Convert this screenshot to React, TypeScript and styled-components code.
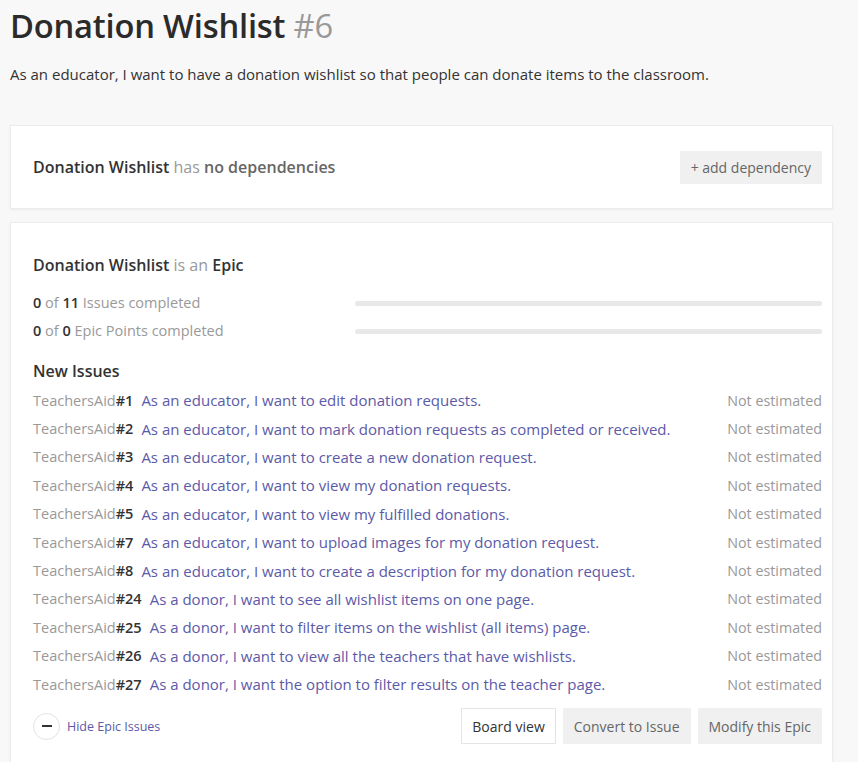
import React from "react";
import styled, { createGlobalStyle } from "styled-components";

const Global = createGlobalStyle`
  html, body { margin: 0; padding: 0; background: #f8f8f8; }
  body { font-family: "Open Sans", "Noto Sans", sans-serif; color: #333; }
  * { box-sizing: border-box; }
`;

const Page = styled.div`
  padding: 4px 25px 0 10px;
`;

const Title = styled.h1`
  margin: 0;
  font-size: 32.7px;
  font-weight: 600;
  color: #2b2b2b;
  line-height: 44px;
  letter-spacing: -0.2px;
`;

const Num = styled.span`
  color: #999;
  font-weight: 400;
`;

const Desc = styled.p`
  margin: 16px 0 0;
  font-size: 15px;
  color: #333;
  line-height: 20px;
`;

const Card = styled.section`
  background: #fff;
  border: 1px solid #ececec;
  box-shadow: 0 1px 2px rgba(0, 0, 0, 0.06);
  margin-top: 13px;
  padding: 22px 10px 22px 22px;
`;

const TopCard = styled(Card)`
  margin-top: 41px;
  padding: 24px 10px 24px 22px;
  display: flex;
  align-items: center;
  justify-content: space-between;
  min-height: 84px;
`;

const Statement = styled.div`
  font-size: 16px;
  font-weight: 600;
  color: #333;
`;

const Muted = styled.span`
  color: #999;
  font-weight: 400;
`;

const Grey = styled.span`
  color: #666;
`;

const Button = styled.button<{ $light?: boolean }>`
  font-family: inherit;
  font-size: 14px;
  height: ${(p) => (p.$light ? "36px" : "33px")};
  padding: 0 10px;
  border: 1px solid ${(p) => (p.$light ? "#e4e4e4" : "#f0f0f0")};
  background: ${(p) => (p.$light ? "#fff" : "#f0f0f0")};
  color: ${(p) => (p.$light ? "#333" : "#666")};
  cursor: pointer;
`;

const ActionButton = styled(Button)`
  height: 36px;
`;

const EpicHead = styled(Statement)`
  margin-top: 9px;
  line-height: 22px;
`;

const Progress = styled.div`
  margin-top: 17px;
  display: flex;
  flex-direction: column;
  gap: 8px;
`;

const ProgressRow = styled.div`
  display: grid;
  grid-template-columns: 322px 1fr;
  align-items: center;
  font-size: 14.5px;
  color: #999;
  line-height: 20px;
`;

const Strong = styled.b`
  color: #333;
  font-weight: 600;
`;

const Bar = styled.div`
  height: 5px;
  border-radius: 3px;
  background: #e8e8e8;
`;

const SubHead = styled.h3`
  margin: 19px 0 0;
  font-size: 16px;
  font-weight: 600;
  color: #333;
  line-height: 22px;
`;

const List = styled.ul`
  list-style: none;
  margin: 4px 0 0;
  padding: 0;
`;

const Item = styled.li`
  display: flex;
  align-items: center;
  justify-content: space-between;
  height: 28.4px;
`;

const Key = styled.span`
  color: #999;
  font-size: 14.5px;
  margin-right: 8px;
  white-space: nowrap;
`;

const Link = styled.a`
  color: #5c5aa8;
  font-size: 15px;
  text-decoration: none;
  flex: 1;
  white-space: nowrap;
`;

const Estimate = styled.span`
  color: #999;
  font-size: 14.3px;
  white-space: nowrap;
`;

const Footer = styled.div`
  margin-top: 10px;
  display: flex;
  align-items: center;
  justify-content: space-between;
`;

const Toggle = styled.a`
  display: flex;
  align-items: center;
  gap: 7px;
  color: #5c5aa8;
  font-size: 12.5px;
  text-decoration: none;
`;

const Circle = styled.span`
  width: 27px;
  height: 27px;
  border-radius: 50%;
  border: 1px solid #e2e2e2;
  display: flex;
  align-items: center;
  justify-content: center;
`;

const Minus = styled.span`
  width: 10px;
  height: 2px;
  background: #333;
`;

const Actions = styled.div`
  display: flex;
  gap: 7px;
`;

const issues: [string, string][] = [
  ["1", "As an educator, I want to edit donation requests."],
  ["2", "As an educator, I want to mark donation requests as completed or received."],
  ["3", "As an educator, I want to create a new donation request."],
  ["4", "As an educator, I want to view my donation requests."],
  ["5", "As an educator, I want to view my fulfilled donations."],
  ["7", "As an educator, I want to upload images for my donation request."],
  ["8", "As an educator, I want to create a description for my donation request."],
  ["24", "As a donor, I want to see all wishlist items on one page."],
  ["25", "As a donor, I want to filter items on the wishlist (all items) page."],
  ["26", "As a donor, I want to view all the teachers that have wishlists."],
  ["27", "As a donor, I want the option to filter results on the teacher page."],
];

export default function App() {
  return (
    <>
      <Global />
      <Page>
        <Title>
          Donation Wishlist <Num>#6</Num>
        </Title>
        <Desc>
          As an educator, I want to have a donation wishlist so that people can donate items to the classroom.
        </Desc>
        <TopCard>
          <Statement>
            Donation Wishlist <Muted>has</Muted> <Grey>no dependencies</Grey>
          </Statement>
          <Button>+ add dependency</Button>
        </TopCard>
        <Card>
          <EpicHead>
            Donation Wishlist <Muted>is an</Muted> Epic
          </EpicHead>
          <Progress>
            <ProgressRow>
              <span>
                <Strong>0</Strong> of <Strong>11</Strong> Issues completed
              </span>
              <Bar />
            </ProgressRow>
            <ProgressRow>
              <span>
                <Strong>0</Strong> of <Strong>0</Strong> Epic Points completed
              </span>
              <Bar />
            </ProgressRow>
          </Progress>
          <SubHead>New Issues</SubHead>
          <List>
            {issues.map(([n, t]) => (
              <Item key={n}>
                <Key>
                  TeachersAid<Strong>#{n}</Strong>
                </Key>
                <Link href="#">{t}</Link>
                <Estimate>Not estimated</Estimate>
              </Item>
            ))}
          </List>
          <Footer>
            <Toggle href="#">
              <Circle>
                <Minus />
              </Circle>
              Hide Epic Issues
            </Toggle>
            <Actions>
              <ActionButton $light>Board view</ActionButton>
              <ActionButton>Convert to Issue</ActionButton>
              <ActionButton>Modify this Epic</ActionButton>
            </Actions>
          </Footer>
        </Card>
      </Page>
    </>
  );
}
